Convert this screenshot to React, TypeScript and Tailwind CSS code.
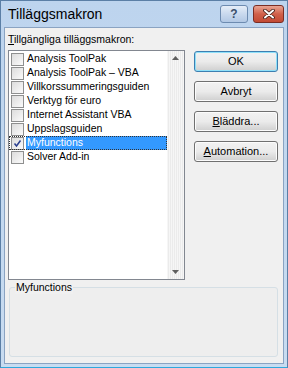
import React from 'react';

const ITEMS = [
  { name: 'Analysis ToolPak', checked: false },
  { name: 'Analysis ToolPak – VBA', checked: false },
  { name: 'Villkorssummeringsguiden', checked: false },
  { name: 'Verktyg för euro', checked: false },
  { name: 'Internet Assistant VBA', checked: false },
  { name: 'Uppslagsguiden', checked: false },
  { name: 'Myfunctions', checked: true, selected: true },
  { name: 'Solver Add-in', checked: false },
];

const font = { fontFamily: '"Liberation Sans", Arial, sans-serif' };

function Checkbox({ checked }: { checked: boolean }) {
  return (
    <span className="flex h-[13px] w-[13px] shrink-0 items-center justify-center border border-[#8e8f8f] bg-gradient-to-br from-[#dcdcdc] to-[#fbfbfb]">
      {checked ? (
        <svg width="9" height="9" viewBox="0 0 9 9">
          <path d="M1.5 4.5 L3.5 7 L7.5 1.5" fill="none" stroke="#2a3f8f" strokeWidth="1.5" />
        </svg>
      ) : null}
    </span>
  );
}

function Btn({ label, u, focused }: { label: string; u?: number; focused?: boolean }) {
  return (
    <button
      className={`flex h-[21px] w-[84px] items-center justify-center rounded-[3px] border bg-gradient-to-b from-[#f2f2f2] via-[#ebebeb] to-[#cfcfcf] text-[11px] text-black ${
        focused ? 'border-[#3c7fb1] shadow-[inset_0_0_0_1px_#8fe0f9]' : 'border-[#707070] shadow-[inset_0_0_0_1px_#fcfcfc]'
      }`}
    >
      {u === undefined ? (
        label
      ) : (
        <span>
          {label.slice(0, u)}
          <span className="underline">{label[u]}</span>
          {label.slice(u + 1)}
        </span>
      )}
    </button>
  );
}

export default function App() {
  return (
    <div
      className="flex h-[368px] w-[288px] flex-col border border-[#5b7fa6] border-b-[#2fa8dc] bg-gradient-to-b from-[#bdd4ee] to-[#c8dcf1] px-[3px] pb-[3px]"
      style={font}
    >
      <div className="flex h-[26px] shrink-0 items-center pl-[4px]">
        <span className="text-[14px] text-black">Tilläggsmakron</span>
        <div className="ml-auto flex items-start gap-[5px] self-start pt-[4px]">
          <div className="flex h-[18px] w-[28px] items-center justify-center rounded-[3px] border border-[#6d8bb0] bg-gradient-to-b from-[#e6eef8] via-[#c9d9ee] to-[#b2c8e4] text-[12px] font-bold text-[#3a4f6b]">
            ?
          </div>
          <div className="flex h-[18px] w-[31px] items-center justify-center rounded-[3px] border border-[#7a2d24] bg-gradient-to-b from-[#e8a493] via-[#d0604a] to-[#c24a34]">
            <svg width="12" height="10" viewBox="0 0 12 10">
              <path d="M2 1.5 L10 8.5 M10 1.5 L2 8.5" stroke="#3a1a14" strokeWidth="3.6" strokeLinecap="round" />
              <path d="M2 1.5 L10 8.5 M10 1.5 L2 8.5" stroke="#ffffff" strokeWidth="2" strokeLinecap="round" />
            </svg>
          </div>
        </div>
      </div>

      <div className="flex flex-1 flex-col border border-[#8aa3c2] bg-[#f0f0f0] pl-[3px] pr-[5px] text-[10.5px] text-black">
        <div className="mt-[4px] h-[14px] leading-[14px]">
          <span className="underline">T</span>illgängliga tilläggsmakron:
        </div>
        <div className="mt-[4px] flex gap-[9px]">
          <div className="flex h-[230px] w-[177px] border border-[#828790] bg-white">
            <div className="flex-1 pt-[1px]">
              {ITEMS.map((it) => (
                <div
                  key={it.name}
                  className={`flex h-[14px] items-center pl-[2px] ${it.selected ? 'outline-1 outline-dotted outline-[#333] -outline-offset-1' : ''}`}
                >
                  <Checkbox checked={it.checked} />
                  <span
                    className={`ml-[2px] flex h-[14px] flex-1 items-center pl-[1px] text-[10.5px] ${
                      it.selected ? 'bg-[#3399ff] text-white' : ''
                    }`}
                  >
                    {it.name}
                  </span>
                </div>
              ))}
            </div>
            <div className="flex w-[17px] flex-col items-center justify-between bg-[repeating-linear-gradient(90deg,#f6f6f6_0px,#f6f6f6_1px,#ebebeb_1px,#ebebeb_2px)] py-[5px]">
              <svg width="7" height="4" viewBox="0 0 7 4">
                <path d="M0 4 L3.5 0 L7 4 Z" fill="#5f5f5f" />
              </svg>
              <svg width="7" height="4" viewBox="0 0 7 4">
                <path d="M0 0 L3.5 4 L7 0 Z" fill="#5f5f5f" />
              </svg>
            </div>
          </div>
          <div className="mt-[1px] flex flex-col gap-[9px]">
            <Btn label="OK" focused />
            <Btn label="Avbryt" />
            <Btn label="Bläddra..." u={0} />
            <Btn label="Automation..." u={0} />
          </div>
        </div>
        <div className="relative ml-[1px] mt-[7px] h-[70px] w-[269px] rounded-[3px] border border-[#d5dfe5] bg-[#eeeeee]">
          <span className="absolute -top-[8px] left-[5px] bg-[#f0f0f0] px-[1px] leading-[14px]">Myfunctions</span>
        </div>
      </div>
    </div>
  );
}
